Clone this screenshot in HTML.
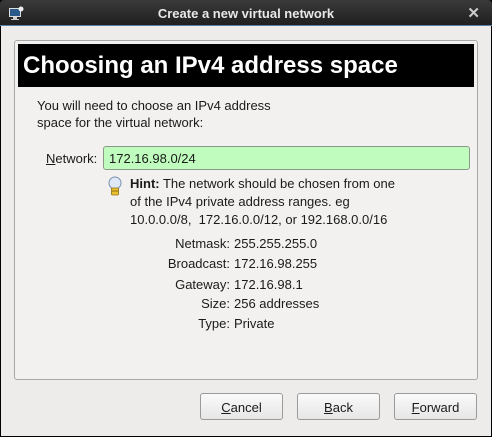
<!DOCTYPE html>
<html><head><style>
*{margin:0;padding:0;box-sizing:border-box}
body{width:492px;height:437px;background:#000;font-family:"Liberation Sans",sans-serif;font-size:13px;color:#1a1a1a;position:relative;overflow:hidden}
.tb{position:absolute;left:0;top:0;width:492px;height:26px;background:linear-gradient(#3a3a3a,#1e1e1e);border-radius:4px 4px 0 0}
.tb .t{position:absolute;left:0;right:0;top:6px;text-align:center;color:#e8e8e8;font-weight:bold;font-size:13px}
.tb .x{position:absolute;right:12px;top:4px;color:#ccc;font-size:15px;font-weight:bold}
.line{position:absolute;left:0;top:25px;width:492px;height:1px;background:#5a7fa8}
.win{position:absolute;left:1px;top:26px;width:490px;height:410px;background:#edeceb}
.fr{position:absolute;left:14px;top:40px;width:464px;height:340px;border:1px solid #a8a8a8;border-radius:3px;background:#f2f1f0}
.hd{position:absolute;left:18px;top:44px;width:456px;height:43px;background:#000;color:#fff;font-weight:bold;font-size:24px;padding:8px 0 0 5px}
.a{position:absolute;white-space:nowrap}
.inp{position:absolute;left:103px;top:146px;width:367px;height:24px;background:#c0fcbe;border:1px solid #8a9a88;border-radius:3px;padding:4px 5px}
.btn{position:absolute;top:393px;width:83px;height:27px;border:1px solid #9a9a9a;border-radius:3px;background:linear-gradient(#fafafa,#e6e6e6);text-align:center;padding-top:6px}
.r{text-align:right;width:130px;left:100px}
</style></head><body>
<div class="tb"><svg style="position:absolute;left:8px;top:6px" width="16" height="15"><rect x="1" y="2" width="12" height="9" fill="#ddd"/><rect x="2" y="3" width="10" height="7" fill="#2a5a8a"/><rect x="5" y="11" width="4" height="2" fill="#ccc"/><rect x="3" y="13" width="8" height="1" fill="#ccc"/><circle cx="13" cy="3" r="2.5" fill="#eee"/></svg><div class="t">Create a new virtual network</div><div class="x">✕</div></div>
<div class="line"></div>
<div class="win"></div>
<div class="fr"></div>
<div class="hd">Choosing an IPv4 address space</div>
<div class="a" style="left:37px;top:97px;line-height:17px">You will need to choose an IPv4 address<br>space for the virtual network:</div>
<div class="a" style="left:46px;top:151px"><u>N</u>etwork:</div>
<div class="inp">172.16.98.0/24</div>
<svg style="position:absolute;left:108px;top:176px" width="14" height="22"><circle cx="7" cy="7" r="6" fill="#dfe9f5" stroke="#7a90b0"/><rect x="3.5" y="12" width="7" height="7" rx="1" fill="#e8c030" stroke="#907010" stroke-width=".8"/><line x1="4" y1="15" x2="10" y2="15" stroke="#907010"/></svg>
<div class="a" style="left:130px;top:175px;line-height:18px"><b>Hint:</b> The network should be chosen from one<br>of the IPv4 private address ranges. eg<br>10.0.0.0/8,&nbsp; 172.16.0.0/12, or 192.168.0.0/16</div>
<div class="a r" style="top:236px">Netmask:</div><div class="a" style="left:234px;top:236px">255.255.255.0</div>
<div class="a r" style="top:256px">Broadcast:</div><div class="a" style="left:234px;top:256px">172.16.98.255</div>
<div class="a r" style="top:277px">Gateway:</div><div class="a" style="left:234px;top:277px">172.16.98.1</div>
<div class="a r" style="top:296px">Size:</div><div class="a" style="left:234px;top:296px">256 addresses</div>
<div class="a r" style="top:316px">Type:</div><div class="a" style="left:234px;top:316px">Private</div>
<div class="btn" style="left:200px"><u>C</u>ancel</div>
<div class="btn" style="left:297px"><u>B</u>ack</div>
<div class="btn" style="left:394px"><u>F</u>orward</div>
</body></html>
